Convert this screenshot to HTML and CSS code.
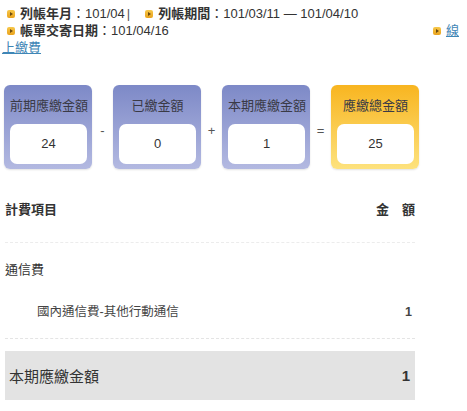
FILE: index.html
```html
<!DOCTYPE html>
<html lang="zh-Hant">

<head>
    <meta name="viewport" content="width=device-width, initial-scale=1.0" />
    <title>帳單明細</title>
    <link rel="stylesheet" href="styles.css">
</head>

<body>
    <div class="info">
        <div class="info-row">
            <span class="item"><i class="dot"></i><b>列帳年月</b>：101/04</span>
            <span class="sep">|</span>
            <span class="item"><i class="dot"></i><b>列帳期間</b>：101/03/11 — 101/04/10</span>
        </div>
        <div class="info-row spread">
            <span class="item"><i class="dot"></i><b>帳單交寄日期</b>：101/04/16</span>
            <span class="item"><i class="dot"></i><a href="#">線</a></span>
        </div>
        <div class="info-row">
            <a href="#" class="wrap-link">上繳費</a>
        </div>
    </div>

    <div class="sums">
        <div class="box">
            <div class="box-title">前期應繳金額</div>
            <div class="box-value">24</div>
        </div>
        <div class="op">-</div>
        <div class="box">
            <div class="box-title">已繳金額</div>
            <div class="box-value">0</div>
        </div>
        <div class="op">+</div>
        <div class="box">
            <div class="box-title">本期應繳金額</div>
            <div class="box-value">1</div>
        </div>
        <div class="op">=</div>
        <div class="box total">
            <div class="box-title">應繳總金額</div>
            <div class="box-value">25</div>
        </div>
    </div>

    <div class="bill">
        <div class="bill-head">
            <span>計費項目</span>
            <span>金　額</span>
        </div>
        <div class="bill-group">
            <div class="group-name">通信費</div>
            <div class="bill-line">
                <span>國內通信費-其他行動通信</span>
                <span class="amount">1</span>
            </div>
        </div>
        <div class="bill-total">
            <span>本期應繳金額</span>
            <span class="amount">1</span>
        </div>
    </div>
</body>

</html>
```

FILE: styles.css
```css
* {
    padding: 0;
    margin: 0;
    box-sizing: border-box;
}

body {
    background-color: #ffffff;
    color: #333333;
    font-family: "Liberation Sans", "Noto Sans CJK TC", sans-serif;
    font-size: 13px;
}

.info {
    padding: 5px 8px 0 7px;
    width: 467px;
}

.info-row {
    display: flex;
    align-items: center;
    height: 17px;
    line-height: 17px;
}

.info-row.spread {
    justify-content: space-between;
}

.item {
    display: flex;
    align-items: center;
}

.item b {
    font-weight: bold;
}

.dot {
    display: inline-block;
    width: 8px;
    height: 8px;
    margin-right: 5px;
    border-radius: 2px;
    background: linear-gradient(#f7c84a, #e9a21c);
    position: relative;
}

.dot:after {
    content: "";
    position: absolute;
    left: 3px;
    top: 2px;
    border-left: 3px solid #6b4a10;
    border-top: 2px solid transparent;
    border-bottom: 2px solid transparent;
}

.sep {
    margin: 0 15px 0 2px;
    color: #555555;
}

a {
    color: #3f86b6;
    text-decoration: underline;
}

.wrap-link {
    margin-left: -5px;
}

.sums {
    display: flex;
    align-items: center;
    margin-top: 29px;
    padding-left: 4px;
}

.box {
    width: 88px;
    height: 84px;
    padding: 0 5px 5px 6px;
    border-radius: 6px;
    background: linear-gradient(#7d89c7, #b3b9e1);
    box-shadow: 0 1px 2px rgba(0, 0, 0, 0.12);
    display: flex;
    flex-direction: column;
}

.box.total {
    background: linear-gradient(#f8b520, #fde27e);
}

.box-title {
    height: 39px;
    line-height: 42px;
    text-align: center;
    color: #3a3a46;
    white-space: nowrap;
}

.box-value {
    height: 40px;
    line-height: 40px;
    background-color: #ffffff;
    border-radius: 7px;
    text-align: center;
    color: #333333;
}

.op {
    width: 21px;
    text-align: center;
    color: #555555;
    padding-top: 6px;
}

.bill {
    margin: 31px 0 0 5px;
    width: 410px;
}

.bill-head {
    display: flex;
    justify-content: space-between;
    height: 43px;
    line-height: 20px;
    font-weight: bold;
    border-bottom: 1px dashed #ececec;
}

.bill-group {
    padding: 17px 0 16px;
    border-bottom: 1px dashed #e4e4e4;
}

.group-name {
    line-height: 20px;
}

.bill-line {
    display: flex;
    justify-content: space-between;
    margin-top: 22px;
    padding: 0 3px 0 32px;
    line-height: 20px;
    font-size: 12.5px;
    color: #444444;
}

.amount {
    font-weight: bold;
}

.bill-total {
    display: flex;
    justify-content: space-between;
    align-items: center;
    margin-top: 12px;
    height: 49px;
    padding: 0 5px 0 4px;
    background-color: #e3e3e3;
    font-size: 15px;
}
```
